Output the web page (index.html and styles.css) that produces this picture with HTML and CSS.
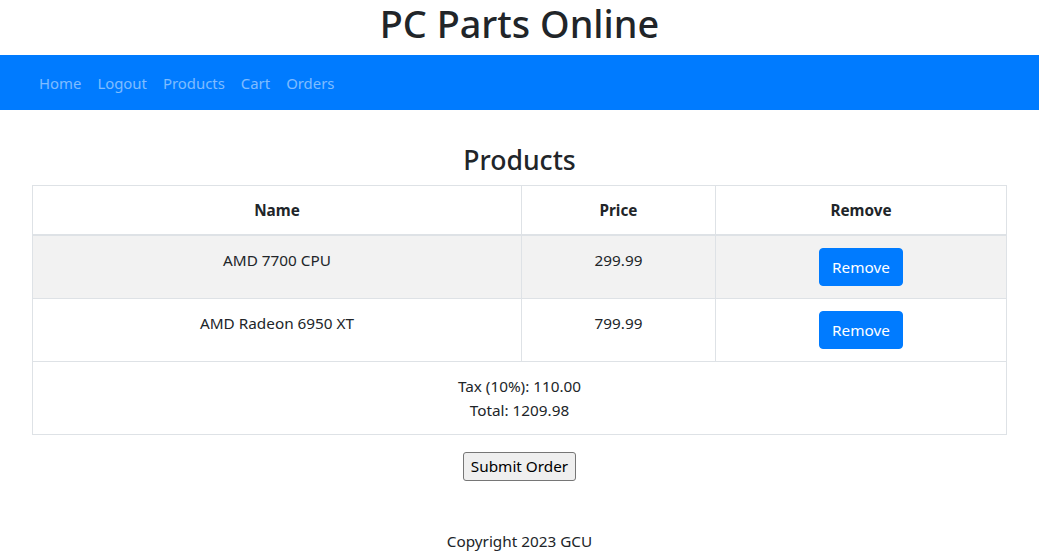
FILE: index.html
```html
<!DOCTYPE html>
<html lang="en">
<head>
<meta charset="utf-8">
<title>PC Parts Online</title>
<link rel="stylesheet" href="styles.css">
</head>
<body>
<header class="site-header">
  <h1 class="site-title">PC Parts Online</h1>
</header>
<nav class="navbar">
  <div class="nav-inner">
    <a class="nav-link" href="#">Home</a>
    <a class="nav-link" href="#">Logout</a>
    <a class="nav-link" href="#">Products</a>
    <a class="nav-link" href="#">Cart</a>
    <a class="nav-link" href="#">Orders</a>
  </div>
</nav>
<main class="main">
  <h3 class="page-title">Products</h3>
  <table class="cart-table">
    <colgroup>
      <col class="col-name">
      <col class="col-price">
      <col class="col-remove">
    </colgroup>
    <thead>
      <tr><th>Name</th><th>Price</th><th>Remove</th></tr>
    </thead>
    <tbody>
      <tr class="striped">
        <td>AMD 7700 CPU</td>
        <td>299.99</td>
        <td><button class="btn-remove">Remove</button></td>
      </tr>
      <tr>
        <td>AMD Radeon 6950 XT</td>
        <td>799.99</td>
        <td><button class="btn-remove">Remove</button></td>
      </tr>
      <tr>
        <td colspan="3">Tax (10%): 110.00<br>Total: 1209.98</td>
      </tr>
    </tbody>
  </table>
  <div class="submit-row">
    <button class="btn-submit">Submit Order</button>
  </div>
</main>
<footer class="footer">Copyright 2023 GCU</footer>
</body>
</html>
```

FILE: styles.css
```css
html, body {
  margin: 0;
  padding: 0;
}
body {
  font-family: "Noto Sans", "Open Sans", sans-serif;
  font-size: 15.3px;
  line-height: 24px;
  color: #212529;
  background: #fff;
}
.site-header {
  text-align: center;
}
.site-title {
  margin: 0 0 7px;
  font-size: 37.8px;
  line-height: 48px;
  font-weight: 500;
}
.navbar {
  background: #007bff;
  height: 55px;
  display: flex;
  align-items: center;
}
.nav-inner {
  display: flex;
  padding-left: 31px;
}
.nav-link {
  color: rgba(255, 255, 255, 0.5);
  text-decoration: none;
  padding: 8px;
  font-size: 14.9px;
}
.main {
  padding: 33px 32px 0;
}
.page-title {
  margin: 0 0 8px;
  text-align: center;
  font-size: 26.6px;
  line-height: 34px;
  font-weight: 500;
}
.cart-table {
  width: 100%;
  border-collapse: collapse;
  text-align: center;
  margin-bottom: 17px;
}
.col-name { width: 489px; }
.col-price { width: 194px; }
.cart-table th,
.cart-table td {
  border: 1px solid #dee2e6;
  padding: 12px;
  vertical-align: top;
}
.cart-table th {
  font-weight: 700;
}
.cart-table thead th {
  border-bottom: 2px solid #dee2e6;
}
.striped td {
  background: #f2f2f2;
}
.btn-remove {
  font-family: inherit;
  font-size: 15.3px;
  line-height: 24px;
  color: #fff;
  background: #007bff;
  border: 1px solid #007bff;
  border-radius: 4px;
  padding: 6px 12px;
  cursor: pointer;
}
.submit-row {
  text-align: center;
}
.btn-submit {
  font-family: inherit;
  font-size: 15.3px;
  line-height: 21px;
  color: #000;
  background: #efefef;
  border: 1px solid #767676;
  border-radius: 3px;
  padding: 3px 7px;
}
.footer {
  text-align: center;
  margin-top: 48px;
}
```
